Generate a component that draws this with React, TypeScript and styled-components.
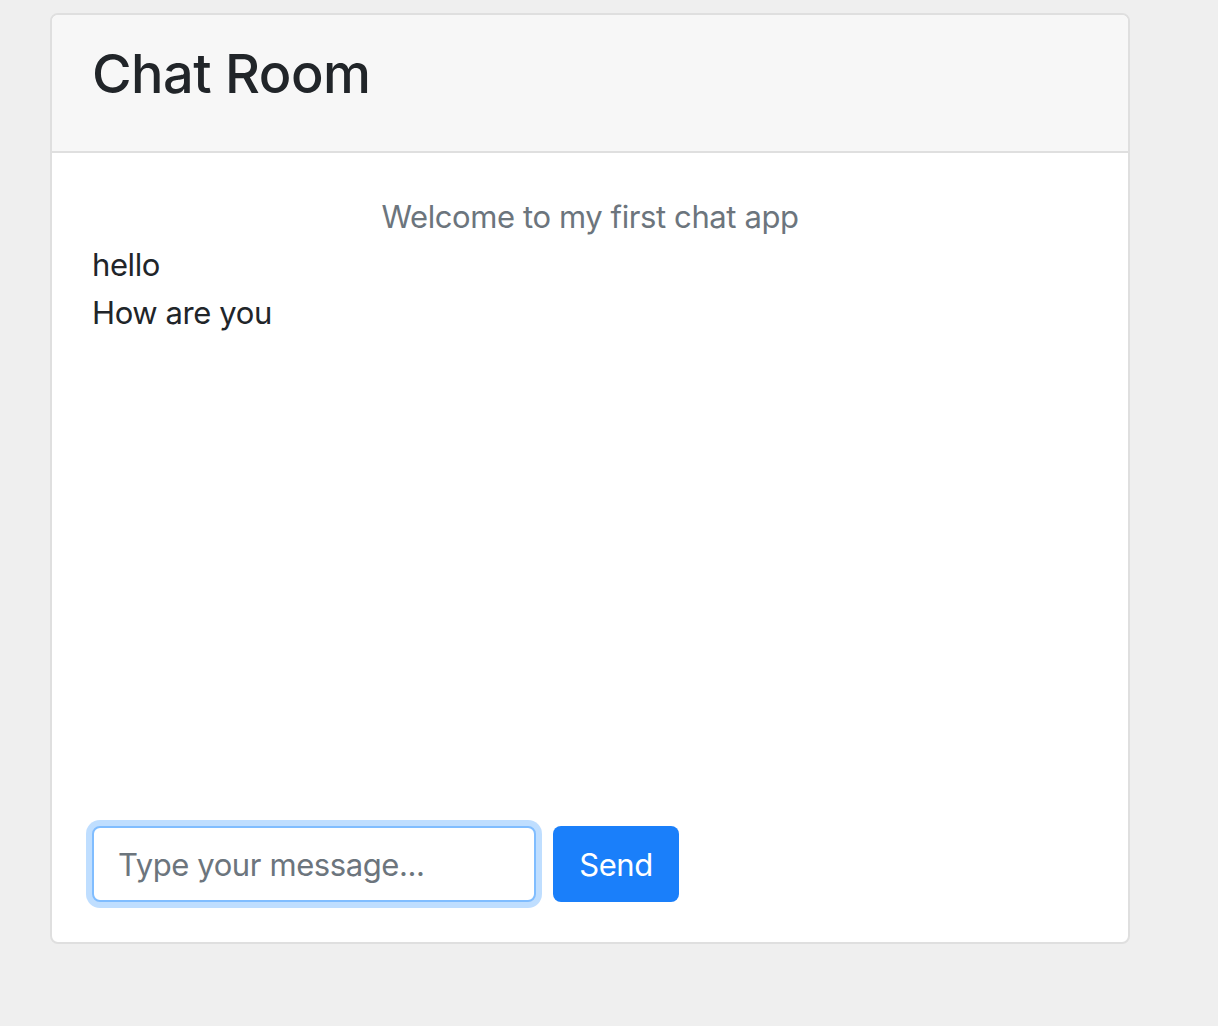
import styled, { createGlobalStyle } from "styled-components";

const GlobalStyle = createGlobalStyle`
  html, body {
    margin: 0;
    padding: 0;
    background: #efefef;
  }
  body {
    font-family: Inter, "Noto Sans", "Liberation Sans", sans-serif;
    color: #212529;
  }
`;

const Card = styled.div`
  margin: 13px 0 0 50px;
  width: 1080px;
  height: 931px;
  box-sizing: border-box;
  display: flex;
  flex-direction: column;
  background: #fff;
  border: 2px solid #dfdfdf;
  border-radius: 8px;
  overflow: hidden;
`;

const CardHeader = styled.div`
  background: #f7f7f7;
  border-bottom: 2px solid #dfdfdf;
  padding: 24px 40px;
`;

const Title = styled.h1`
  margin: 0 0 18px;
  font-size: 54px;
  line-height: 70px;
  font-weight: 500;
  letter-spacing: -0.5px;
`;

const CardBody = styled.div`
  flex: 1;
  display: flex;
  flex-direction: column;
  padding: 40px;
`;

const Messages = styled.div`
  flex: 1;
  font-size: 31px;
  line-height: 48px;
  letter-spacing: -0.4px;
`;

const Line = styled.div<{ $muted?: boolean }>`
  color: ${({ $muted }) => ($muted ? "#6c757d" : "#212529")};
  text-align: ${({ $muted }) => ($muted ? "center" : "left")};
`;

const Composer = styled.form`
  display: flex;
  align-items: center;
  gap: 17px;
  margin: 0;
`;

const Input = styled.input`
  width: 444px;
  height: 76px;
  box-sizing: border-box;
  padding: 0 24px;
  font-family: inherit;
  font-size: 31px;
  letter-spacing: -0.4px;
  color: #495057;
  border: 2px solid #80bdff;
  border-radius: 8px;
  box-shadow: 0 0 0 6px rgba(0, 123, 255, 0.25);
  outline: none;

  &::placeholder {
    color: #6c757d;
  }
`;

const SendButton = styled.button`
  height: 76px;
  width: 126px;
  border: none;
  border-radius: 8px;
  background: #1a7ffa;
  color: #fff;
  font-family: inherit;
  font-size: 31px;
  letter-spacing: -0.4px;
  cursor: pointer;
`;

const messages = ["hello", "How are you"];

const App = () => {
  return (
    <>
      <GlobalStyle />
      <Card>
        <CardHeader>
          <Title>Chat Room</Title>
        </CardHeader>
        <CardBody>
          <Messages>
            <Line $muted>Welcome to my first chat app</Line>
            {messages.map((msg, i) => (
              <Line key={i}>{msg}</Line>
            ))}
          </Messages>
          <Composer onSubmit={(e) => e.preventDefault()}>
            <Input placeholder="Type your message..." />
            <SendButton type="submit">Send</SendButton>
          </Composer>
        </CardBody>
      </Card>
    </>
  );
};

export default App;
